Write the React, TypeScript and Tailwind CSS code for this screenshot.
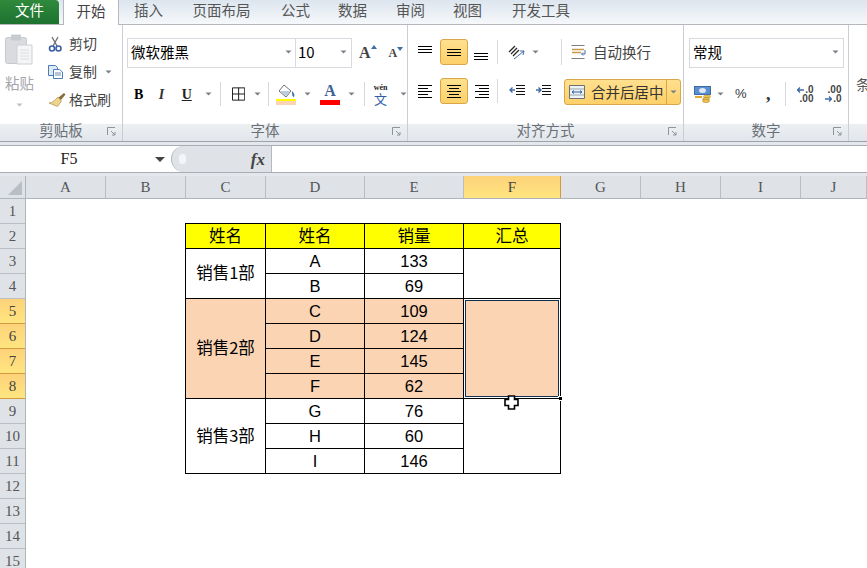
import type { ReactNode } from "react";

const cjk = "font-['Microsoft_YaHei','Noto_Sans_CJK_SC','Noto_Sans',sans-serif]";
const serif = "font-['Liberation_Serif',serif]";

function Caret({ className = "" }: { className?: string }) {
	return (
		<svg width="7" height="4" viewBox="0 0 7 4" className={`shrink-0 ${className}`}>
			<path d="M0.5 0.5h6L3.5 3.5z" fill="#7a7f86" />
		</svg>
	);
}

function Lines({ widths, align = "left", gap = 2 }: { widths: number[]; align?: string; gap?: number }) {
	return (
		<div className={`flex w-[16px] flex-col ${align === "center" ? "items-center" : align === "right" ? "items-end" : "items-start"}`} style={{ gap }}>
			{widths.map((w, i) => (
				<div key={i} className="h-px bg-black" style={{ width: w }} />
			))}
		</div>
	);
}

function Launcher() {
	return (
		<svg width="10" height="10" viewBox="0 0 10 10" className="shrink-0">
			<path d="M0.5 8V0.5H8" fill="none" stroke="#8e949b" />
			<path d="M4 4l4 4M8 5v3H5" fill="none" stroke="#8e949b" />
		</svg>
	);
}

function Group({ width, label, children, launcher = true }: { width: string; label: string; children: ReactNode; launcher?: boolean }) {
	return (
		<div className={`relative flex h-full shrink-0 flex-col border-r border-[#c9ced4] ${width}`}>
			<div className="min-h-0 flex-1">{children}</div>
			<div className="flex h-[17px] items-center justify-center bg-gradient-to-b from-[#edf0f3] to-[#e2e6ea] pb-[5px] text-[14.5px] leading-none text-[#6a7078]">
				{label}
			</div>
			{launcher && (
				<div className="absolute bottom-[4px] right-[5px]">
					<Launcher />
				</div>
			)}
		</div>
	);
}

function Sep({ className = "h-[26px]" }: { className?: string }) {
	return <div className={`w-px shrink-0 bg-[#d5d9de] ${className}`} />;
}

function TabBar() {
	const tabs = [
		["插入", "w-[29px] ml-[15px]"],
		["页面布局", "w-[59px] ml-[29px]"],
		["公式", "w-[29px] ml-[30px]"],
		["数据", "w-[29px] ml-[28px]"],
		["审阅", "w-[29px] ml-[29px]"],
		["视图", "w-[29px] ml-[28px]"],
		["开发工具", "w-[60px] ml-[29px]"],
	];
	return (
		<div className="relative flex h-[25px] items-stretch border-b border-[#b4b8bd] bg-gradient-to-b from-[#dce5ee] to-[#f6f8fa] text-[14.5px]">
			<div className="flex w-[59px] items-center justify-center rounded-tr-sm bg-gradient-to-b from-[#2f8a3c] to-[#1e7230] pb-[4px] text-white">文件</div>
			<div className="relative z-10 ml-[4px] flex h-[25px] w-[56px] items-center justify-center border-x border-[#b4b8bd] bg-white pb-[4px] text-[#444]">开始</div>
			{tabs.map(([t, c]) => (
				<div key={t} className={`flex items-center justify-center whitespace-nowrap pb-[4px] text-[#555] ${c}`}>
					{t}
				</div>
			))}
		</div>
	);
}

function Clipboard() {
	return (
		<div className="flex pl-[5px] pt-[9px]">
			<div className="flex w-[36px] flex-col items-start">
				<svg width="28" height="31" viewBox="0 0 28 31">
					<rect x="0.5" y="3.5" width="21" height="26" rx="2" fill="#d9dbde" stroke="#c6c9cd" />
					<rect x="6" y="0.5" width="10" height="6" rx="1" fill="#c8cbcf" />
					<path d="M12 11h15v19H12z" fill="#f4f5f6" stroke="#cdd0d3" />
					<path d="M15 16h9M15 19h9M15 22h9M15 25h9" stroke="#dcdee0" />
				</svg>
				<div className="mt-[8px] text-[14.5px] leading-[20px] text-[#a3a6aa]">粘贴</div>
				<Caret className="ml-[11px] mt-[10px] opacity-50" />
			</div>
			<div className="ml-[7px] flex flex-col gap-[7px] text-[14px] leading-[21px] text-[#444]">
				<div className="flex items-center gap-[6px] -mt-px">
					<svg width="15" height="16" viewBox="0 0 15 16">
						<path d="M4 1l5 9M10 1l-5 9" stroke="#6a6f76" strokeWidth="1.3" />
						<circle cx="4" cy="12.5" r="2.5" fill="none" stroke="#3a5fa8" strokeWidth="1.6" />
						<circle cx="10.5" cy="12.5" r="2.5" fill="none" stroke="#3a5fa8" strokeWidth="1.6" />
					</svg>
					剪切
				</div>
				<div className="flex items-center gap-[6px]">
					<svg width="15" height="14" viewBox="0 0 15 14">
						<path d="M0.5 0.5h7l2 2v8h-9z" fill="#dfe9f6" stroke="#4b7dbb" />
						<path d="M5.5 4.5h6l3 2.5v6.5h-9z" fill="#fff" stroke="#4b7dbb" />
						<path d="M7 8h6M7 10h6" stroke="#6d8fb8" />
					</svg>
					<span>复制</span>
					<Caret className="ml-[2px]" />
				</div>
				<div className="flex items-center gap-[3px]">
					<svg width="18" height="16" viewBox="0 0 18 16">
						<path d="M10 6l6-5 1.5 1.5-5 6z" fill="#8a6a3a" />
						<path d="M10 5l3.5 4-4 5.5L1 11c3 0 5-2 9-6z" fill="#ecd58f" stroke="#b08e45" strokeWidth="0.7" />
					</svg>
					格式刷
				</div>
			</div>
		</div>
	);
}

function Font() {
	return (
		<div className="pl-[4px] pt-[13px]">
			<div className="flex items-center">
				<div className="flex h-[30px] w-[169px] items-center justify-between border border-[#d6dade] pb-[2px] pl-[3px] pr-[3px] text-[14.5px] text-black">
					微软雅黑
					<Caret />
				</div>
				<div className="flex h-[30px] w-[56px] items-center justify-between border border-l-0 border-[#d6dade] pb-[2px] pl-[2px] pr-[4px] text-[15px] text-black">
					10
					<Caret />
				</div>
				<div className={`ml-[7px] flex items-start text-[16px] font-bold leading-none text-[#444] ${serif}`}>
					A<svg width="6" height="4" viewBox="0 0 6 4"><path d="M0 4l3-4 3 4z" fill="#3f6ca8" /></svg>
				</div>
				<div className={`ml-[12px] flex items-start text-[12px] font-bold leading-none text-[#444] ${serif}`}>
					A<svg width="6" height="4" viewBox="0 0 6 4"><path d="M0 0l3 4 3-4z" fill="#3f6ca8" /></svg>
				</div>
			</div>
			<div className="mt-[13px] flex h-[26px] items-center">
				<span className={`ml-[7px] w-[22px] text-[14px] font-bold text-black ${serif}`}>B</span>
				<span className={`ml-[4px] w-[20px] text-[14px] font-bold italic text-[#333] ${serif}`}>I</span>
				<span className={`ml-[4px] text-[14px] font-bold text-[#222] underline ${serif}`}>U</span>
				<Caret className="ml-[13px]" />
				<Sep className="ml-[8px] h-[24px]" />
				<svg width="14" height="14" viewBox="0 0 14 14" className="ml-[11px]">
					<path d="M0.5 0.5h13v13H0.5zM7 0.5v13M0.5 7h13" fill="none" stroke="#111" />
				</svg>
				<Caret className="ml-[9px]" />
				<Sep className="ml-[7px] h-[24px]" />
				<div className="ml-[7px] flex flex-col items-center">
					<svg width="20" height="15" viewBox="0 0 20 15">
						<path d="M8 1l7 6-5 6-7-6z" fill="#fff" stroke="#6b7178" />
						<path d="M4 7h10l-4 5z" fill="#b9cbe0" />
						<path d="M16 7c2 2 3 4 2 6-2 0-2-4-2-6z" fill="#3d6fb0" />
					</svg>
					<div className="h-[2px] w-[20px] bg-[#ffff00]" />
					<div className="h-[4px] w-[20px] bg-[#fbd4b4]" />
				</div>
				<Caret className="ml-[8px]" />
				<div className="ml-[9px] flex flex-col items-center">
					<span className={`text-[16px] font-bold leading-[15px] text-[#3f5f96] ${serif}`}>A</span>
					<div className="mt-[2px] h-[5px] w-[20px] bg-[#ff0000]" />
				</div>
				<Caret className="ml-[8px]" />
				<Sep className="ml-[9px] h-[24px]" />
				<div className="ml-[7px] flex w-[18px] flex-col items-center leading-none">
					<span className={`text-[8px] font-bold text-[#222] ${serif}`}>wén</span>
					<span className="text-[13px] leading-[13px] text-[#2f5fa5]">文</span>
				</div>
				<Caret className="ml-[11px]" />
			</div>
		</div>
	);
}

const hilite = "rounded-[3px] border border-[#d9a648] bg-gradient-to-b from-[#ffe08e] to-[#fdd069]";

function Alignment() {
	return (
		<div className="pl-[10px] pt-[14px]">
			<div className="flex h-[26px] items-center">
				<div className="flex h-[26px] w-[22px] items-start pt-[7px]">
					<Lines widths={[14, 14, 14]} />
				</div>
				<div className={`flex h-[26px] w-[28px] items-center justify-center ${hilite}`}>
					<Lines widths={[14, 14, 14]} align="center" />
				</div>
				<div className="flex h-[26px] w-[26px] items-end justify-center pb-[5px]">
					<Lines widths={[14, 14, 14]} align="center" />
				</div>
				<Sep className="ml-[3px] h-[24px]" />
				<svg width="18" height="15" viewBox="0 0 18 15" className="ml-[10px]">
					<path d="M1 7l6-6M3 9l6-6M5 11l6-6" stroke="#222" strokeWidth="1.2" />
					<path d="M6 14l10-8M16 6l-4 0M16 6l-1 4" fill="none" stroke="#3f6ca8" />
				</svg>
				<Caret className="ml-[6px]" />
				<Sep className="ml-[22px] h-[26px]" />
				<div className="ml-[9px] flex items-center gap-[6px] text-[14.5px] text-[#444]">
					<svg width="16" height="14" viewBox="0 0 16 14">
						<path d="M0.5 0.5h13M0.5 13.5h13" stroke="#7a7f86" />
						<path d="M1 4.5h12M1 7.5h9" stroke="#c59a4a" strokeWidth="1.4" />
						<path d="M14 5v4h-3M12 7.5L10.5 9l1.5 1.5" fill="none" stroke="#3f6ca8" />
					</svg>
					<span className="pb-[1px]">自动换行</span>
				</div>
			</div>
			<div className="mt-[13px] flex h-[26px] items-center">
				<div className="flex w-[22px] justify-start">
					<Lines widths={[14, 10, 14, 10, 14]} />
				</div>
				<div className={`flex h-[26px] w-[28px] items-center justify-center ${hilite}`}>
					<Lines widths={[14, 10, 14, 10, 14]} align="center" />
				</div>
				<div className="flex w-[26px] justify-center">
					<Lines widths={[14, 10, 14, 10, 14]} align="right" />
				</div>
				<Sep className="ml-[3px] h-[24px]" />
				<div className="ml-[11px] flex w-[16px] items-center">
					<svg width="16" height="14" viewBox="0 0 16 14">
						<path d="M7 1.5h9M7 4.5h9M7 7.5h9M7 10.5h9" stroke="#111" />
						<path d="M6 6H1M3.5 3.5L1 6l2.5 2.5" fill="none" stroke="#3f6ca8" strokeWidth="1.4" />
					</svg>
				</div>
				<div className="ml-[10px] flex w-[16px] items-center">
					<svg width="16" height="14" viewBox="0 0 16 14">
						<path d="M7 1.5h9M7 4.5h9M7 7.5h9M7 10.5h9" stroke="#111" />
						<path d="M1 6h5M3.5 3.5L6 6 3.5 8.5" fill="none" stroke="#3f6ca8" strokeWidth="1.4" />
					</svg>
				</div>
				<div className={`ml-[13px] flex h-[26px] w-[117px] translate-y-px items-center pl-[4px] text-[14.5px] text-[#333] ${hilite}`}>
					<svg width="16" height="14" viewBox="0 0 16 14" className="shrink-0">
						<path d="M0.5 0.5h15v13H0.5z" fill="#eef3f8" stroke="#6b7178" />
						<path d="M1 4h14M1 10h14" stroke="#9aa2aa" />
						<path d="M3 7h10M5 5.5L3 7l2 1.5M11 5.5L13 7l-2 1.5" fill="none" stroke="#2f5fa5" />
					</svg>
					<span className="ml-[6px] whitespace-nowrap pb-[1px]">合并后居中</span>
					<div className="ml-[2px] h-full w-px bg-[#d9a648]" />
					<Caret className="ml-[3px]" />
				</div>
			</div>
		</div>
	);
}

function NumberFormat() {
	return (
		<div className="pl-[5px] pt-[13px]">
			<div className="flex h-[30px] w-[155px] items-center justify-between border border-[#d6dade] pb-[2px] pl-[3px] pr-[4px] text-[14.5px] text-black">
				常规
				<Caret />
			</div>
			<div className="mt-[13px] flex h-[26px] items-center">
				<svg width="18" height="17" viewBox="0 0 18 17" className="ml-[5px]">
					<rect x="0.5" y="0.5" width="16" height="8" fill="#5b8fcf" stroke="#3f6ca8" />
					<ellipse cx="8.5" cy="4.5" rx="3.5" ry="2.5" fill="#dfe9f6" />
					<path d="M1 11h7" stroke="#e0a92f" strokeWidth="2" />
					<ellipse cx="13" cy="10.5" rx="3.5" ry="1.5" fill="#efc34f" stroke="#a87f22" strokeWidth="0.5" />
					<ellipse cx="12" cy="13" rx="3.5" ry="1.5" fill="#efc34f" stroke="#a87f22" strokeWidth="0.5" />
					<ellipse cx="12" cy="15" rx="3.5" ry="1.5" fill="#efc34f" stroke="#a87f22" strokeWidth="0.5" />
				</svg>
				<Caret className="ml-[5px]" />
				<span className="ml-[11px] w-[18px] font-['Liberation_Sans',sans-serif] text-[13px] text-[#333]">%</span>
				<span className={`ml-[13px] text-[18px] font-bold leading-none text-[#333] ${serif}`}>,</span>
				<Sep className="ml-[14px] h-[24px]" />
				<div className="ml-[10px] flex w-[18px] flex-col items-end font-['Liberation_Sans',sans-serif] text-[10px] font-bold leading-[9px] text-[#444]">
					<span className="flex items-center gap-[1px]">
						<svg width="7" height="6" viewBox="0 0 7 6"><path d="M7 3H1M3 0.5L0.5 3 3 5.5" fill="none" stroke="#3f6ca8" strokeWidth="1.3" /></svg>
						.0
					</span>
					<span>.00</span>
				</div>
				<div className="ml-[10px] flex w-[18px] flex-col items-end font-['Liberation_Sans',sans-serif] text-[10px] font-bold leading-[9px] text-[#444]">
					<span>.00</span>
					<span className="flex items-center gap-[1px]">
						<svg width="7" height="6" viewBox="0 0 7 6"><path d="M0 3h6M4 0.5L6.5 3 4 5.5" fill="none" stroke="#3f6ca8" strokeWidth="1.3" /></svg>
						.0
					</span>
				</div>
			</div>
		</div>
	);
}

function Ribbon() {
	return (
		<div className="flex h-[117px] items-stretch border-b border-[#9ea3a9] bg-white">
			<Group width="w-[123px]" label="剪贴板">
				<Clipboard />
			</Group>
			<Group width="w-[285px]" label="字体">
				<Font />
			</Group>
			<Group width="w-[276px]" label="对齐方式">
				<Alignment />
			</Group>
			<Group width="w-[165px]" label="数字">
				<NumberFormat />
			</Group>
			<div className="flex min-w-0 flex-1 flex-col">
				<div className="flex-1 pl-[7px] pt-[49px] text-[14px] leading-[20px] text-[#555]">条</div>
				<div className="h-[17px] bg-gradient-to-b from-[#edf0f3] to-[#e2e6ea]" />
			</div>
		</div>
	);
}

function FormulaBar() {
	return (
		<div className="mt-[3px] flex h-[28px] items-stretch border-y border-[#a9aeb4] bg-white">
			<div className="relative flex w-[171px] items-center">
				<span className={`w-[138px] text-center text-[16px] text-[#222] ${serif}`}>F5</span>
				<svg width="10" height="5" viewBox="0 0 10 5" className="ml-[17px]">
					<path d="M0 0h10L5 5z" fill="#444" />
				</svg>
			</div>
			<div className="flex w-[101px] items-center justify-between rounded-l-[13px] border border-y-0 border-[#b4b9bf] bg-[#dfe2e6] pl-[7px] pr-[6px]">
				<div className="h-[10px] w-[7px] rounded-full bg-[#f4f5f6]" />
				<span className={`text-[17px] font-bold italic leading-none text-[#444] ${serif}`}>fx</span>
			</div>
			<div className="flex-1" />
		</div>
	);
}

const columns = [
	["A", "w-[80px]"],
	["B", "w-[80px]"],
	["C", "w-[80px]"],
	["D", "w-[99px]"],
	["E", "w-[99px]"],
	["F", "w-[97px]"],
	["G", "w-[80px]"],
	["H", "w-[80px]"],
	["I", "w-[80px]"],
	["J", "w-[66px]"],
];

const body = "flex items-center justify-center border-t border-l border-black text-[16.5px] text-black";
const dept = "pb-[2px] text-[16.5px]";
const peach = "bg-[#fbd4b4]";
const numFont = "font-['Liberation_Sans',sans-serif]";

function Sheet() {
	const rows = [
		["C", "109"],
		["D", "124"],
		["E", "145"],
		["F", "62"],
	];
	const rest = [
		["G", "76"],
		["H", "60"],
		["I", "146"],
	];
	return (
		<div className="mt-[3px] bg-white">
			<div className="flex h-[23px] border-b border-[#b0b5bb] bg-[#dfe3e8]">
				<div className="flex w-[26px] shrink-0 items-end justify-end border-r border-[#b0b5bb] p-[3px]">
					<svg width="14" height="14" viewBox="0 0 14 14">
						<path d="M14 0v14H0z" fill="#b9bec4" />
					</svg>
				</div>
				{columns.map(([c, w]) => (
					<div
						key={c}
						className={`flex shrink-0 items-center justify-center border-r text-[15px] ${serif} ${w} ${
							c === "F"
								? "border-[#d69a3c] bg-gradient-to-b from-[#fdd27a] to-[#ffe57f] text-[#444]"
								: "border-[#b9bec4] text-[#555]"
						}`}
					>
						{c}
					</div>
				))}
			</div>
			<div className="flex">
				<div className="flex w-[26px] shrink-0 flex-col border-r border-[#b0b5bb] bg-[#dfe3e8]">
					{Array.from({ length: 15 }, (_, i) => i + 1).map((n) => (
						<div
							key={n}
							className={`flex h-[25px] shrink-0 items-center justify-center border-b text-[15px] ${serif} ${
								n >= 5 && n <= 8
									? "border-[#d69a3c] bg-gradient-to-b from-[#fdd27a] to-[#ffe57f] text-[#444]"
									: "border-[#b9bec4] text-[#555]"
							}`}
						>
							{n}
						</div>
					))}
				</div>
				<div className="pl-[159px] pt-[24px]">
					<div className={`grid grid-cols-[80px_99px_99px_97px] auto-rows-[25px] border-r border-b border-black ${cjk}`}>
						<div className={`${body} ${dept} bg-[#ffff00]`}>姓名</div>
						<div className={`${body} ${dept} bg-[#ffff00]`}>姓名</div>
						<div className={`${body} ${dept} bg-[#ffff00]`}>销量</div>
						<div className={`${body} ${dept} bg-[#ffff00]`}>汇总</div>

						<div className={`${body} ${dept} row-span-2`}>销售1部</div>
						<div className={`${body} ${numFont}`}>A</div>
						<div className={`${body} ${numFont}`}>133</div>
						<div className={`${body} row-span-2`} />
						<div className={`${body} ${numFont}`}>B</div>
						<div className={`${body} ${numFont}`}>69</div>

						<div className={`${body} ${dept} ${peach} row-span-4`}>销售2部</div>
						{rows.slice(0, 1).map(([a, b]) => (
							<div key={a} className="contents">
								<div className={`${body} ${peach} ${numFont}`}>{a}</div>
								<div className={`${body} ${peach} ${numFont}`}>{b}</div>
							</div>
						))}
						<div className={`${body} ${peach} relative row-span-4`}>
							<div className="absolute inset-0 border border-white">
								<div className="h-full w-full border border-[#12304f]" />
							</div>
							<div className="absolute -bottom-[3px] -right-[3px] h-[5px] w-[5px] border border-white bg-black" />
						</div>
						{rows.slice(1).map(([a, b]) => (
							<div key={a} className="contents">
								<div className={`${body} ${peach} ${numFont}`}>{a}</div>
								<div className={`${body} ${peach} ${numFont}`}>{b}</div>
							</div>
						))}

						<div className={`${body} ${dept} row-span-3`}>销售3部</div>
						{rest.slice(0, 1).map(([a, b]) => (
							<div key={a} className="contents">
								<div className={`${body} ${numFont}`}>{a}</div>
								<div className={`${body} ${numFont}`}>{b}</div>
							</div>
						))}
						<div className={`${body} relative row-span-3`}>
							<svg width="15" height="15" viewBox="0 0 15 15" className="absolute left-[40px] -top-[4px]">
								<path d="M4.5 1h6v3.5H14v6h-3.5V14h-6v-3.5H1v-6h3.5z" fill="#fff" stroke="#000" strokeWidth="1.6" />
							</svg>
						</div>
						{rest.slice(1).map(([a, b]) => (
							<div key={a} className="contents">
								<div className={`${body} ${numFont}`}>{a}</div>
								<div className={`${body} ${numFont}`}>{b}</div>
							</div>
						))}
					</div>
				</div>
			</div>
		</div>
	);
}

export default function App() {
	return (
		<div className={`h-[568px] w-[867px] overflow-hidden bg-[#e4e7eb] ${cjk}`}>
			<TabBar />
			<Ribbon />
			<FormulaBar />
			<Sheet />
		</div>
	);
}
